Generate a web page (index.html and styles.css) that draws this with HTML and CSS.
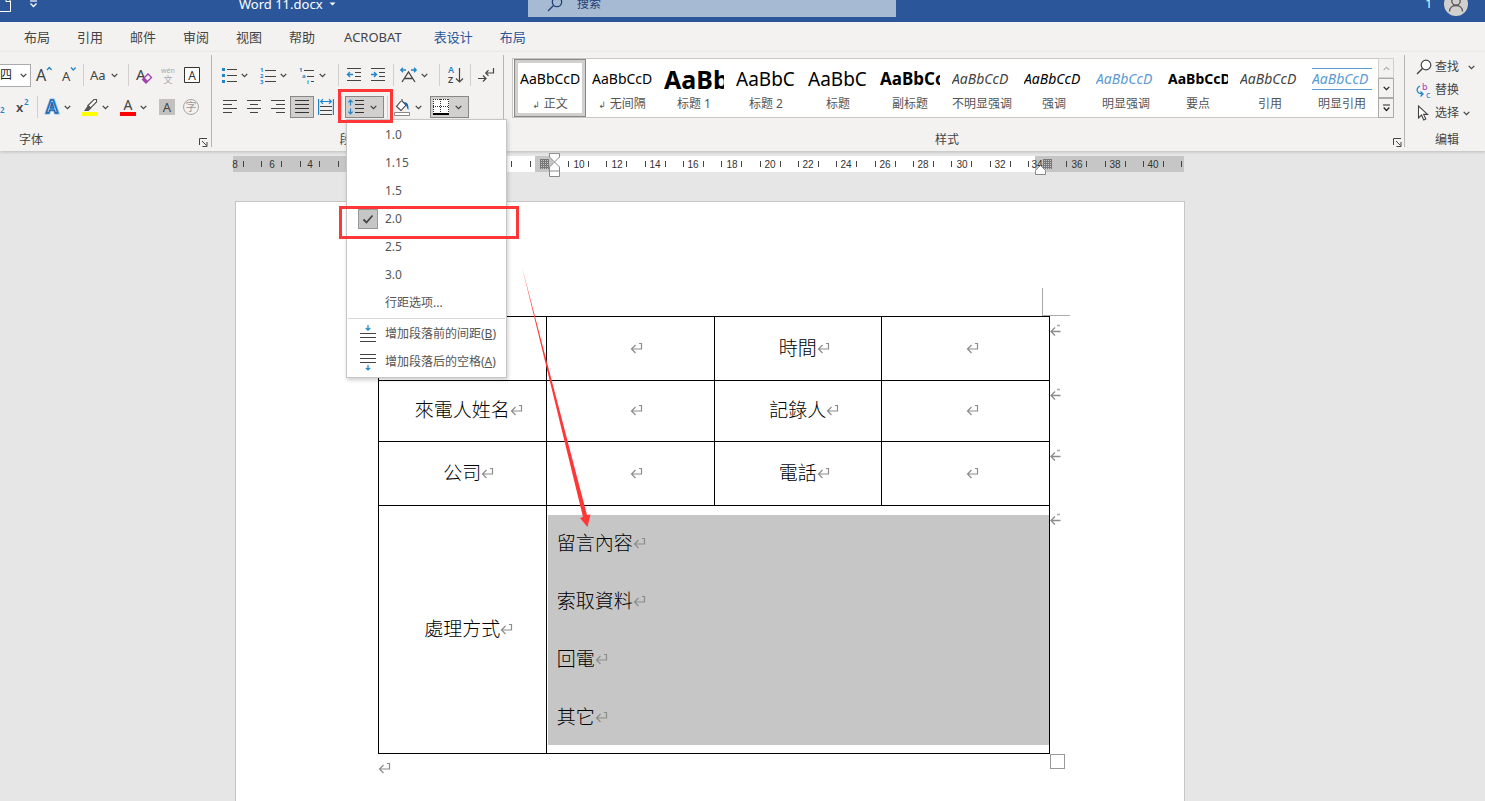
FILE: index.html
```
<!DOCTYPE html>
<html lang="zh-CN">
<head>
<meta charset="utf-8">
<title>Word 11.docx</title>
<link rel="stylesheet" href="styles.css">
</head>
<body>
<svg class="defs" aria-hidden="true">
  <symbol id="chev" viewBox="0 0 7 5"><path d="M.7 .9L3.5 3.6L6.3 .9" fill="none" stroke="currentColor" stroke-width="1.3"/></symbol>
  <symbol id="ret" viewBox="0 0 13 12"><path d="M9 1.500h2.500v5.500H1.500M5.500 3L1.500 7L5.500 11" fill="none" stroke="#8c8c8c" stroke-width="1.200"/></symbol>
  <symbol id="rowend" viewBox="0 0 11 12"><path d="M1 7.500h9.500M5 3.500L1 7.500L5 11.500" fill="none" stroke="#8c8c8c" stroke-width="1.300"/><path d="M7 1.500h3" stroke="#aaa" stroke-width="1.500"/></symbol>
  <symbol id="launch" viewBox="0 0 9 9"><path d="M.5 7V.5H8M3 3l4.500 4.500M8 4v4.500H3.500" fill="none" stroke="#444"/></symbol>
</svg>

<header class="titlebar">
  <div class="titlebar-inner">
    <div class="title-left">
      <button class="plain" aria-label="新建"><svg width="12" height="18" viewBox="0 0 12 18"><path d="M0 16.500h10.500V6L6.500 2H0M6 2v4.500h4.500" fill="none" stroke="#fff"/></svg></button>
      <button class="plain qat" aria-label="自定义快速访问工具栏"><svg width="9" height="8" viewBox="0 0 9 8"><path d="M1 1h7" stroke="#fff" stroke-width="1.200"/><path d="M1.500 3.500L4.500 6.500L7.500 3.500" fill="none" stroke="#fff" stroke-width="1.300"/></svg></button>
      <div class="doc-name">Word 11.docx <svg width="7" height="4" viewBox="0 0 7 4"><path d="M.5 .5h6L3.500 3.500z" fill="#fff"/></svg></div>
    </div>
    <label class="search">
      <svg width="16" height="16" viewBox="0 0 16 16"><circle cx="10" cy="6" r="4.700" fill="none" stroke="#1f3f73" stroke-width="1.200"/><path d="M6.500 9.500L1 15" stroke="#1f3f73" stroke-width="1.200"/></svg>
      <input type="text" placeholder="搜索" aria-label="搜索">
    </label>
    <div class="title-right">
      <span>1</span>
      <button class="plain" aria-label="帐户"><svg width="24" height="24" viewBox="0 0 24 24"><circle cx="12" cy="12" r="12" fill="#d2d0ce"/><circle cx="12" cy="9" r="4.200" fill="none" stroke="#555" stroke-width="1.300"/><path d="M5.500 19.500c0-8 13-8 13 0" fill="none" stroke="#555" stroke-width="1.300"/></svg></button>
    </div>
  </div>
</header>

<nav class="tabs">
  <a href="#">布局</a><a href="#">引用</a><a href="#">邮件</a><a href="#">审阅</a><a href="#">视图</a><a href="#">帮助</a><a href="#" class="latin">ACROBAT</a><a href="#" class="context">表设计</a><a href="#" class="context">布局</a>
</nav>

<section class="ribbon">
  <div class="group font-group">
    <div class="row">
      <span class="size-box"><select aria-label="字号"><option>四</option></select><svg width="7" height="5"><use href="#chev"/></svg></span>
      <button class="ic" aria-label="增大字号"><svg width="18" height="18" viewBox="0 0 18 18"><text x="1" y="15" font-size="16" fill="#444">A</text><path d="M12 4l2.300-2.500L16.600 4" fill="none" stroke="#1e86c8" stroke-width="1.300"/></svg></button>
      <button class="ic" aria-label="减小字号"><svg width="18" height="18" viewBox="0 0 18 18"><text x="3" y="15" font-size="13" fill="#444">A</text><path d="M12 1.500l2.300 2.500L16.600 1.500" fill="none" stroke="#1e86c8" stroke-width="1.300"/></svg></button>
      <i class="sep"></i>
      <button class="wide" aria-label="更改大小写"><svg width="17" height="16" viewBox="0 0 17 16"><text x="0" y="13" font-size="13" fill="#444">Aa</text></svg><svg width="7" height="5"><use href="#chev"/></svg></button>
      <i class="sep"></i>
      <button class="ic" aria-label="清除格式"><svg width="18" height="18" viewBox="0 0 18 18"><text x="1" y="14" font-size="15" fill="#444">A</text><path d="M7.500 13.500L13 8L16.500 11.500L11 17z" fill="#f3f2f1" stroke="#a040b0" stroke-width="1.300"/><path d="M7.500 13.500L9.500 11.500L13 15L11 17z" fill="#a040b0"/></svg></button>
      <button class="ic" aria-label="拼音指南"><svg width="18" height="20" viewBox="0 0 18 20"><text x="9" y="8" font-size="7" text-anchor="middle" fill="#aaa">wén</text><text x="9" y="18" font-size="9" text-anchor="middle" fill="#aaa">文</text></svg></button>
      <button class="ic" aria-label="字符边框"><svg width="16" height="16" viewBox="0 0 16 16"><path d="M.5.5h15v15H.5z" fill="#fff" stroke="#333"/><text x="8" y="12.500" font-size="12" text-anchor="middle" fill="#333">A</text></svg></button>
    </div>
    <div class="row">
      <button class="plain sub-cut" aria-label="下标"><svg width="6" height="16" viewBox="0 0 6 16"><text x="0" y="14" font-size="8" font-weight="600" fill="#1e86c8">2</text></svg></button>
      <button class="ic" aria-label="上标"><svg width="16" height="18" viewBox="0 0 16 18"><text x="2" y="14" font-size="13" font-weight="600" fill="#444">x</text><text x="10" y="7" font-size="8" font-weight="600" fill="#1e86c8">2</text></svg></button>
      <i class="sep"></i>
      <button class="wide" aria-label="文本效果"><svg width="16" height="18" viewBox="0 0 16 18"><text x="8" y="15" font-size="17" font-weight="600" text-anchor="middle" fill="#fff" stroke="#8cc4ee" stroke-width="3">A</text><text x="8" y="15" font-size="17" font-weight="600" text-anchor="middle" fill="#fff" stroke="#1768b0" stroke-width="1.500">A</text></svg><svg width="7" height="5"><use href="#chev"/></svg></button>
      <button class="wide" aria-label="突出显示"><svg width="16" height="18" viewBox="0 0 16 18"><path d="M0 14h16v4H0z" fill="#ff0"/><path d="M6 7.500L12 1.500h2.500v2.500L8.500 10z" fill="#fff" stroke="#555" stroke-width="1.200"/><path d="M6 7L4.500 9.500L2 13h4.500l3-3z" fill="#555"/></svg><svg width="7" height="5"><use href="#chev"/></svg></button>
      <button class="wide" aria-label="字体颜色"><svg width="16" height="18" viewBox="0 0 16 18"><path d="M0 14h16v4H0z" fill="#f00"/><text x="8" y="12" font-size="14" text-anchor="middle" fill="#444">A</text></svg><svg width="7" height="5"><use href="#chev"/></svg></button>
      <button class="ic" aria-label="字符底纹"><svg width="16" height="16" viewBox="0 0 16 16"><path d="M0 0h16v16H0z" fill="#c3c1bf"/><text x="8" y="13" font-size="13" text-anchor="middle" fill="#444">A</text></svg></button>
      <button class="ic" aria-label="带圈字符"><svg width="18" height="18" viewBox="0 0 18 18"><circle cx="9" cy="9" r="7.500" fill="none" stroke="#a6a6a6"/><text x="9" y="13" font-size="11" text-anchor="middle" fill="#999">字</text></svg></button>
    </div>
    <div class="caption"><span>字体</span><button class="plain" aria-label="字体设置"><svg width="9" height="9"><use href="#launch"/></svg></button></div>
  </div>

  <div class="group para-group">
    <div class="row">
      <button class="wide" aria-label="项目符号"><svg width="16" height="16" viewBox="0 0 16 16"><path d="M1 1h3v3H1zM1 7h3v3H1zM1 13h3v3H1z" fill="#1e86c8"/><path d="M6 2.500h10M6 8.500h10M6 14.500h10" stroke="#444"/></svg><svg width="7" height="5"><use href="#chev"/></svg></button>
      <button class="wide" aria-label="编号"><svg width="16" height="17" viewBox="0 0 16 17"><g font-size="6" font-weight="700" fill="#1e86c8"><text x="0" y="5">1</text><text x="0" y="11">2</text><text x="0" y="17">3</text></g><path d="M5 3.500h11M5 9.500h11M5 14.500h11" stroke="#444"/></svg><svg width="7" height="5"><use href="#chev"/></svg></button>
      <button class="wide" aria-label="多级列表"><svg width="16" height="17" viewBox="0 0 16 17"><g font-size="6" font-weight="700" fill="#1e86c8"><text x="0" y="5">1</text><text x="3" y="11">a</text><text x="8" y="17">i</text></g><path d="M5 3.500h10M8 9.500h7M12 14.500h3" stroke="#444"/></svg><svg width="7" height="5"><use href="#chev"/></svg></button>
      <i class="sep"></i>
      <button class="ic" aria-label="减少缩进量"><svg width="16" height="16" viewBox="0 0 16 16"><path d="M1 1.500h14M9 5.500h6M9 9.500h6M1 13.500h14" stroke="#444"/><path d="M1 7.500h6M4 5L1.500 7.500L4 10" fill="none" stroke="#1e86c8" stroke-width="1.300"/></svg></button>
      <button class="ic" aria-label="增加缩进量"><svg width="16" height="16" viewBox="0 0 16 16"><path d="M1 1.500h14M9 5.500h6M9 9.500h6M1 13.500h14" stroke="#444"/><path d="M1 7.500h6M4 5L6.500 7.500L4 10" fill="none" stroke="#1e86c8" stroke-width="1.300"/></svg></button>
      <i class="sep"></i>
      <button class="wide" aria-label="中文版式"><svg width="17" height="16" viewBox="0 0 17 16"><path d="M2 15L8.500 5L15 15M4.500 11.500h8" fill="none" stroke="#444" stroke-width="1.300"/><path d="M1 3h5M3 .8L.8 3L3 5.200M11 3h5M14 .8L16.200 3L14 5.200" fill="none" stroke="#1e86c8" stroke-width="1.300"/></svg><svg width="7" height="5"><use href="#chev"/></svg></button>
      <i class="sep"></i>
      <button class="ic" aria-label="排序"><svg width="17" height="18" viewBox="0 0 17 18"><text x="1" y="7" font-size="9" font-weight="600" fill="#1e86c8">A</text><text x="1" y="17" font-size="9" font-weight="600" fill="#444">Z</text><path d="M12.500 2v14M9 12.500l3.500 3.500L16 12.500" fill="none" stroke="#444" stroke-width="1.200"/></svg></button>
      <i class="sep"></i>
      <button class="ic" aria-label="显示编辑标记"><svg width="18" height="18" viewBox="0 0 18 18"><path d="M16.500 2v5H9M11.500 4.200L8.800 7l2.700 2.800M1 12.500h8M6 9.500l3 3l-3 3" fill="none" stroke="#444" stroke-width="1.200"/></svg></button>
    </div>
    <div class="row">
      <button class="ic" aria-label="左对齐"><svg width="16" height="16" viewBox="0 0 16 16"><path d="M1 1.500h14M1 5.500h9M1 9.500h14M1 13.500h9" stroke="#444"/></svg></button>
      <button class="ic" aria-label="居中"><svg width="16" height="16" viewBox="0 0 16 16"><path d="M1 1.500h14M4 5.500h8M1 9.500h14M4 13.500h8" stroke="#444"/></svg></button>
      <button class="ic" aria-label="右对齐"><svg width="16" height="16" viewBox="0 0 16 16"><path d="M1 1.500h14M6 5.500h9M1 9.500h14M6 13.500h9" stroke="#444"/></svg></button>
      <button class="ic on" aria-label="两端对齐"><svg width="16" height="16" viewBox="0 0 16 16"><path d="M1 1.500h14M1 5.500h14M1 9.500h14M1 13.500h14" stroke="#333"/></svg></button>
      <button class="ic" aria-label="分散对齐"><svg width="16" height="18" viewBox="0 0 16 18"><path d="M.6 1v16M15.400 1v16" stroke="#1e86c8" stroke-width="1.200"/><path d="M3 3.500h10M5 1.200L2.700 3.500L5 5.800M11 1.200l2.300 2.300L11 5.800" fill="none" stroke="#1e86c8" stroke-width="1.200"/><path d="M2 8.500h12M2 12.500h12M2 16.500h12" stroke="#444"/></svg></button>
      <i class="sep"></i>
      <div class="spacing">
        <button class="wide on" aria-label="行和段落间距" aria-expanded="true"><svg width="16" height="16" viewBox="0 0 16 16"><path d="M2.500 1v5.500M.4 3.300L2.500 1.200L4.600 3.300M2.500 9.500V15M.4 12.700L2.500 14.800L4.600 12.700" fill="none" stroke="#1e86c8" stroke-width="1.200"/><path d="M7 1.500h9M7 5.500h9M7 9.500h9M7 13.500h9" stroke="#333"/></svg><svg width="7" height="5"><use href="#chev"/></svg></button>
        <div class="menu" role="menu">
          <button role="menuitem"><i></i>1.0</button>
          <button role="menuitem"><i></i>1.15</button>
          <button role="menuitem"><i></i>1.5</button>
          <button role="menuitem"><i><span class="tick"><svg width="12" height="10" viewBox="0 0 12 10"><path d="M1.500 5.500L4.500 8.500L10.500 1.500" fill="none" stroke="#444" stroke-width="1.800"/></svg></span></i>2.0</button>
          <button role="menuitem"><i></i>2.5</button>
          <button role="menuitem"><i></i>3.0</button>
          <button role="menuitem"><i></i>行距选项...</button>
          <hr>
          <button role="menuitem"><i><svg width="16" height="18" viewBox="0 0 16 18"><path d="M8 0v5M5.800 3L8 5.200L10.200 3" fill="none" stroke="#1e86c8" stroke-width="1.200"/><path d="M0 8.500h16M0 12.500h16M0 16.500h16" stroke="#444"/></svg></i>增加段落前的间距(<u>B</u>)</button>
          <button role="menuitem"><i><svg width="16" height="18" viewBox="0 0 16 18"><path d="M8 12v5M5.800 14.800L8 17L10.200 14.800" fill="none" stroke="#1e86c8" stroke-width="1.200"/><path d="M0 1.500h16M0 5.500h16M0 9.500h16" stroke="#444"/></svg></i>增加段落后的空格(<u>A</u>)</button>
        </div>
        <div class="callout callout-button"></div>
        <div class="callout callout-item"></div>
      </div>
      <i class="sep"></i>
      <button class="wide" aria-label="底纹"><svg width="17" height="18" viewBox="0 0 17 18"><path d="M.5 14.500h15v3H.5z" fill="#fff" stroke="#888"/><path d="M7 3L2.500 8.500L7 12.500L12 7L8 3V1" fill="#fff" stroke="#444" stroke-width="1.100"/><path d="M10 4.500c3-1 5 2 4.500 7.500c-1.500-1-2-4-2.500-5z" fill="#1768b0"/></svg><svg width="7" height="5"><use href="#chev"/></svg></button>
      <button class="wide on" aria-label="边框"><svg width="16" height="16" viewBox="0 0 16 16"><path d="M0 0h16v16H0z" fill="#fff"/><path d="M0 .5h16M0 7.500h16M.5 0v15M7.500 0v15M15.500 0v15" stroke="#333" stroke-dasharray="1 1"/><path d="M0 15h16" stroke="#000" stroke-width="2"/></svg><svg width="7" height="5"><use href="#chev"/></svg></button>
    </div>
    <div class="caption centered"><span>段落</span><button class="plain" aria-label="段落设置"><svg width="9" height="9"><use href="#launch"/></svg></button></div>
  </div>

  <div class="group styles-group">
    <div class="gallery">
      <div class="styles">
        <button class="style current"><span class="pv">AaBbCcD</span><span class="nm"><small>↲</small> 正文</span></button>
        <button class="style"><span class="pv">AaBbCcD</span><span class="nm"><small>↲</small> 无间隔</span></button>
        <button class="style"><span class="pv h1">AaBb</span><span class="nm">标题 1</span></button>
        <button class="style"><span class="pv h2">AaBbC</span><span class="nm">标题 2</span></button>
        <button class="style"><span class="pv h2">AaBbC</span><span class="nm">标题</span></button>
        <button class="style"><span class="pv subtitle">AaBbCc</span><span class="nm">副标题</span></button>
        <button class="style"><span class="pv em soft">AaBbCcD</span><span class="nm">不明显强调</span></button>
        <button class="style"><span class="pv em">AaBbCcD</span><span class="nm">强调</span></button>
        <button class="style"><span class="pv em blue">AaBbCcD</span><span class="nm">明显强调</span></button>
        <button class="style"><span class="pv strong">AaBbCcD</span><span class="nm">要点</span></button>
        <button class="style"><span class="pv em soft">AaBbCcD</span><span class="nm">引用</span></button>
        <button class="style"><span class="pv em blue ruled">AaBbCcD</span><span class="nm">明显引用</span></button>
      </div>
      <div class="scroller">
        <button class="off" aria-label="上一行"><svg width="7" height="5" viewBox="0 0 7 5"><path d="M.7 4L3.500 1.300L6.300 4" fill="none" stroke="#b5b3b1" stroke-width="1.200"/></svg></button>
        <button aria-label="下一行"><svg width="7" height="5"><use href="#chev"/></svg></button>
        <button aria-label="其他"><svg width="7" height="8" viewBox="0 0 7 8"><path d="M0 1h7M.7 3.500L3.500 6.500L6.300 3.500" fill="none" stroke="#222" stroke-width="1.200"/></svg></button>
      </div>
    </div>
    <div class="caption centered"><span>样式</span><button class="plain" aria-label="样式窗格"><svg width="9" height="9"><use href="#launch"/></svg></button></div>
  </div>

  <div class="group edit-group">
    <div class="edit-list">
      <button><svg width="16" height="16" viewBox="0 0 16 16"><circle cx="10" cy="6" r="4.800" fill="#fff" stroke="#444" stroke-width="1.200"/><path d="M6.500 9.500L1 15" stroke="#444" stroke-width="1.400"/></svg>查找<svg class="far" width="7" height="5"><use href="#chev"/></svg></button>
      <button><svg width="16" height="17" viewBox="0 0 16 17"><text x="6" y="8" font-size="9" fill="#a040b0">b</text><text x="10" y="16" font-size="9" fill="#1e86c8">c</text><path d="M4 4C-1 7 1 12 7 12M4.500 9.500L7 12L4.500 14.500" fill="none" stroke="#1e86c8" stroke-width="1.300"/></svg>替换</button>
      <button><svg width="16" height="16" viewBox="0 0 16 16"><path d="M2.500 1v12l3-3l2.300 5l2-1l-2.200-4.600h4z" fill="#fff" stroke="#444" stroke-width="1.100"/></svg>选择<svg width="7" height="5"><use href="#chev"/></svg></button>
    </div>
    <div class="caption"><span>编辑</span></div>
  </div>
</section>

<main class="workspace">
  <svg class="ruler" width="952" height="30" viewBox="0 0 952 30">
    <path d="M0 4h140v16H0zM302 4h20v16h-20zM802 4h149v16h-149z" fill="#c6c6c6"/>
    <path d="M140 4h162v16H140zM320 4h482v16H320z" fill="#fff"/>
    <path d="M307 7.500h9M307 9.500h9M307 11.500h9M307 13.500h9M307 15.500h9M307.500 7v10M309.500 7v10M311.500 7v10M313.500 7v10M315.500 7v10M810 7.500h9M810 9.500h9M810 11.500h9M810 13.500h9M810 15.500h9M810.500 7v10M812.500 7v10M814.500 7v10M816.500 7v10M818.500 7v10" stroke="#777"/>
    <path d="M10.500 9v6M28.500 9v6M48.500 9v6M67.500 9v6M86.500 9v6M105.500 9v6M278.500 9v6M297.500 9v6M335.500 9v6M355.500 9v6M373.500 9v6M393.500 9v6M412.500 9v6M432.500 9v6M450.500 9v6M470.500 9v6M488.500 9v6M508.500 9v6M527.500 9v6M547.500 9v6M565.500 9v6M585.500 9v6M603.500 9v6M623.500 9v6M642.500 9v6M662.500 9v6M680.500 9v6M700.500 9v6M718.500 9v6M738.500 9v6M757.500 9v6M777.500 9v6M795.500 9v6M833.500 9v6M853.500 9v6M872.500 9v6M892.500 9v6M910.500 9v6M930.500 9v6M948.500 9v6" stroke="#444"/>
    <g class="nums"><text x="2" y="16">8</text><text x="39" y="16">6</text><text x="77" y="16">4</text><text x="346" y="16">10</text><text x="384" y="16">12</text><text x="422" y="16">14</text><text x="460" y="16">16</text><text x="499" y="16">18</text><text x="537" y="16">20</text><text x="575" y="16">22</text><text x="613" y="16">24</text><text x="652" y="16">26</text><text x="690" y="16">28</text><text x="729" y="16">30</text><text x="767" y="16">32</text><text x="804" y="16">34</text><text x="844" y="16">36</text><text x="882" y="16">38</text><text x="920" y="16">40</text></g>
    <path d="M316.500 1.500h10v3.500l-5 5l-5-5zM321.500 10l5 5v4h-10v-4zM316.500 19v5.500h10V19M802.500 22.500v-4l5-5l5 5v4z" fill="#fff" stroke="#888"/>
  </svg>

  <article class="page">
    <i class="corner"></i>
    <div class="table-wrap">
      <table>
        <tr class="r-tall"><td></td><td><svg class="ret"><use href="#ret"/></svg></td><td>時間<svg class="ret"><use href="#ret"/></svg></td><td class="last"><svg class="ret"><use href="#ret"/></svg><svg class="rowend"><use href="#rowend"/></svg></td></tr>
        <tr class="r-short"><td>來電人姓名<svg class="ret"><use href="#ret"/></svg></td><td><svg class="ret"><use href="#ret"/></svg></td><td>記錄人<svg class="ret"><use href="#ret"/></svg></td><td class="last"><svg class="ret"><use href="#ret"/></svg><svg class="rowend"><use href="#rowend"/></svg></td></tr>
        <tr class="r-tall"><td>公司<svg class="ret"><use href="#ret"/></svg></td><td><svg class="ret"><use href="#ret"/></svg></td><td>電話<svg class="ret"><use href="#ret"/></svg></td><td class="last"><svg class="ret"><use href="#ret"/></svg><svg class="rowend"><use href="#rowend"/></svg></td></tr>
        <tr><td>處理方式<svg class="ret"><use href="#ret"/></svg></td>
          <td colspan="3" class="last notes"><div class="selection"><p>留言內容<svg class="ret"><use href="#ret"/></svg></p><p>索取資料<svg class="ret"><use href="#ret"/></svg></p><p>回電<svg class="ret"><use href="#ret"/></svg></p><p>其它<svg class="ret"><use href="#ret"/></svg></p></div><svg class="rowend"><use href="#rowend"/></svg></td></tr>
      </table>
      <i class="handle"></i>
    </div>
    <p class="after"><svg class="ret"><use href="#ret"/></svg></p>
    <svg class="arrow" width="72" height="262" viewBox="0 0 72 262"><path d="M1 0L66 248L69.500 247.500L66.500 260L59 251L62 250z" fill="#ff3737"/></svg>
  </article>
</main>
</body>
</html>
```
FILE: styles.css
```
* { box-sizing: border-box; }
body {
  margin: 0;
  height: 100vh;
  overflow: hidden;
  display: flex;
  flex-direction: column;
  background: #e6e6e6;
  color: #444;
  font: 12px/18px "Noto Sans", "Noto Sans CJK SC", sans-serif;
}
svg { display: block; flex: none; overflow: visible; }
button { font: inherit; color: inherit; background: none; border: 0; padding: 0; margin: 0; }
a { color: inherit; text-decoration: none; }
.defs { position: absolute; width: 0; height: 0; }
.plain { display: flex; align-items: center; }

/* Title bar */
.titlebar { height: 22px; overflow: hidden; display: flex; align-items: flex-end; background: #2b579a; color: #fff; }
.titlebar-inner { flex: 1; height: 36px; display: grid; grid-template-columns: 528fr 368px 589fr; align-items: center; }
.title-left { display: flex; align-items: center; }
.qat { margin-left: 17px; }
.doc-name { margin-left: 201px; display: flex; align-items: center; gap: 6px; font-size: 13px; }
.search { display: flex; align-items: center; gap: 11px; height: 26px; padding-left: 19px; background: #a6bad3; }
.search input { flex: 1; min-width: 0; border: 0; padding: 0 0 0 3px; background: none; font: inherit; outline: 0; }
.search input::placeholder { color: #1f3f73; opacity: 1; }
.title-right { display: flex; align-items: center; justify-content: flex-end; gap: 12px; padding-right: 17px; }

/* Tabs */
.tabs { display: flex; align-items: center; gap: 27px; height: 30px; padding-left: 24px; background: #f3f2f1; font-size: 13px; }
.tabs .latin { padding: 0 5px 0 2px; }
.tabs .context { color: #2b579a; }

/* Ribbon */
.ribbon { position: relative; z-index: 2; display: flex; height: 99px; background: #f3f2f1; box-shadow: 0 1px 3px #bbb; }
.group { position: relative; display: flex; flex-direction: column; padding-top: 12px; }
.group:not(:last-child) { border-right: 1px solid #b8b6b4; border-image: linear-gradient(transparent 4px, #b8b6b4 4px, #b8b6b4 94px, transparent 94px) 1; }
.font-group { width: 212px; }
.para-group { width: 292px; padding-left: 6px; }
.styles-group { flex: 1; min-width: 0; padding: 6px 10px 0 8px; }
.edit-group { width: 80px; padding: 3px 0 0 11px; }
.row { display: flex; align-items: center; height: 22px; margin-bottom: 10px; }
.ic, .wide { display: flex; align-items: center; height: 22px; flex: none; }
.ic { width: 24px; justify-content: center; }
.wide { width: 38px; padding: 0 3px; gap: 4px; }
.para-group .wide { width: 39px; }
.on { background: #d2d0ce; border: 1px solid #8a8886; }
.wide.on { padding: 0 2px; gap: 6px; }
.sep { width: 1px; height: 22px; margin: 0 3px; background: #d2d0ce; flex: none; }
.sub-cut { width: 10px; }
.size-box { display: flex; align-items: center; width: 31px; height: 23px; margin-right: 1px; padding-right: 3px; background: #fff; border: 1px solid #ababab; border-left: 0; }
.size-box select { flex: 1; min-width: 0; appearance: none; border: 0; padding: 0; background: none; font: inherit; color: #222; }
.caption { display: flex; align-items: center; height: 18px; margin-top: 3px; }
.caption span { flex: 1; }
.caption .plain { width: 12px; padding-top: 5px; }
.font-group .caption { padding-left: 19px; }
.para-group .caption { margin-left: -6px; }
.centered span { text-align: center; }

/* Style gallery */
.gallery { display: flex; height: 60px; background: #fff; border: 1px solid #c8c6c4; }
.styles { flex: 1; min-width: 0; display: flex; padding-left: 1px; overflow: hidden; }
.style { width: 72px; height: 58px; flex: none; display: flex; flex-direction: column; padding: 4px 6px 0; }
.style.current { border: 1px solid #8a8886; box-shadow: inset 0 0 0 3px #d2d0ce; padding: 3px 5px 0; }
.pv { display: flex; align-items: center; height: 32px; width: 60px; overflow: hidden; color: #000; font-size: 14px; white-space: nowrap; }
.nm { width: 60px; white-space: nowrap; display: flex; justify-content: center; gap: 4px; color: #555; }
.nm small { font: 9px/20px "DejaVu Sans", sans-serif; }
.h1 { font-size: 25px; font-weight: 700; }
.h2 { font-size: 19px; }
.subtitle { font-size: 17px; font-weight: 700; }
.em { font-style: italic; }
.soft { color: #444; }
.blue { color: #5b9bd5; }
.strong { font-weight: 700; }
.ruled { height: 22px; margin: 5px 0; border: solid #5b9bd5; border-width: 1px 0; }
.scroller { display: flex; flex-direction: column; width: 16px; margin: -1px -1px -1px 0; }
.scroller button { flex: 1; display: flex; align-items: center; justify-content: center; border: 1px solid #ababab; background: #f3f2f1; color: #222; }
.scroller .off { border-color: #d2d0ce; }
.styles-group .caption { margin: 13px -8px 0; }
.styles-group .caption .plain { justify-content: flex-end; }

/* Editing */
.edit-list { display: flex; flex-direction: column; }
.edit-list button { display: flex; align-items: center; gap: 4px; height: 23px; padding-top: 1px; }
.edit-list svg:first-child { margin-right: -1px; }
.edit-list .far { margin-left: 5px; }
.edit-group .caption { margin-top: 7px; padding-left: 19px; }

/* Line spacing menu */
.spacing { position: relative; height: 22px; }
.menu { position: absolute; left: 1px; top: 23px; width: 161px; padding: 1px 0; background: #fff; border: 1px solid #c6c6c6; box-shadow: 1px 2px 4px rgba(0, 0, 0, .2); color: #555; }
.menu button { display: flex; align-items: center; width: 100%; height: 28px; white-space: nowrap; }
.menu i { flex: none; width: 38px; height: 20px; padding-left: 3px; display: flex; align-items: center; justify-content: center; }
.menu hr { height: 1px; margin: 1px 1px; border: 0; background: #d8d8d8; }
.tick { width: 20px; height: 20px; display: flex; align-items: center; justify-content: center; background: #c6c6c6; border: 1px solid #999; }
.callout { position: absolute; border: 3px solid #ff3737; pointer-events: none; }
.callout-button { left: -7px; top: -7px; width: 55px; height: 34px; }
.callout-item { left: -6px; top: 110px; width: 180px; height: 33px; }

/* Document */
.workspace { flex: 1; min-height: 0; display: flex; flex-direction: column; align-items: center; padding: 1px 65px 0 0; }
.ruler { margin-right: 2px; }
.nums { font: 10px "Liberation Sans", sans-serif; fill: #333; text-anchor: middle; }
.page { position: relative; flex: 1; width: 100%; max-width: 950px; margin-top: 19px; padding: 114px 134px 0 142px; background: #fff; border: 1px solid #c6c6c6; border-bottom: 0; }
.table-wrap { position: relative; }
table { width: 100%; table-layout: fixed; border-collapse: collapse; color: #000; font: 300 19px/28px "Noto Sans CJK TC", sans-serif; }
td { border: 1px solid #000; padding: 0 0 4px; text-align: center; vertical-align: middle; }
.r-tall { height: 64px; }
.r-short { height: 61px; }
.last { position: relative; }
.notes { padding: 9px 0 8px 1px; text-align: left; }
.selection { padding-left: 9px; background: #c6c6c6; }
.selection p { margin: 0; padding-bottom: 5px; line-height: 53px; }
.selection p:last-child { padding-bottom: 3px; }
/* A paragraph mark takes no room when its line is centred */
.ret { display: inline-block; width: 13px; height: 12px; margin-right: -13px; vertical-align: 1px; }
.rowend { position: absolute; left: 100%; top: 7px; width: 11px; height: 12px; margin-left: 1px; }
.handle { position: absolute; left: 100%; top: 100%; width: 15px; height: 15px; background: #fff; border: 1px solid #999; }
.corner { position: absolute; right: 114px; top: 86px; width: 28px; height: 28px; border: solid #aaa; border-width: 0 0 1px 1px; }
.after { margin: 4px 0 0; line-height: 26px; }
.arrow { position: absolute; left: 285px; top: 65px; }
```
